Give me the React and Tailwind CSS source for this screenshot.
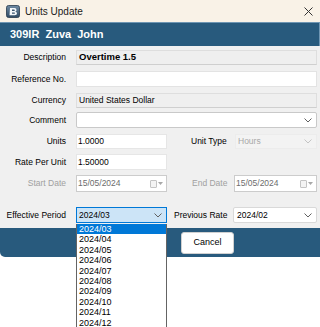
import React from "react";

const periods = [
  "2024/03",
  "2024/04",
  "2024/05",
  "2024/06",
  "2024/07",
  "2024/08",
  "2024/09",
  "2024/10",
  "2024/11",
  "2024/12",
];

function Chevron({ color = "#606060" }) {
  return (
    <svg width="8" height="5" viewBox="0 0 8 5" className="shrink-0">
      <polyline points="0.5,0.5 4,4 7.5,0.5" fill="none" stroke={color} strokeWidth="1" />
    </svg>
  );
}

function DateIcon() {
  return (
    <div className="flex items-center gap-[1px] shrink-0">
      <div className="w-[7px] h-[8px] border border-[#c4c4c4] bg-[#f4f4f4] rounded-[1px]" />
      <svg width="5" height="3" viewBox="0 0 5 3">
        <polygon points="0,0 5,0 2.5,3" fill="#a8a8a8" />
      </svg>
    </div>
  );
}

function Label({ children, muted }) {
  return (
    <div className={`w-[66px] shrink-0 text-right whitespace-nowrap ${muted ? "text-[#a0a0a0]" : "text-black"}`}>
      {children}
    </div>
  );
}

export default function App() {
  return (
    <div
      className="relative w-[320px] h-[327px] overflow-hidden bg-white text-[8.5px] text-black"
      style={{ fontFamily: '"Liberation Sans", Arial, sans-serif' }}
    >
      {/* title bar */}
      <div className="h-[22px] bg-[#f9f2e7] flex items-center pl-[6px] pr-[6px]">
        <svg width="14" height="13" viewBox="0 0 14 13" className="shrink-0">
          <defs>
            <linearGradient id="ic" x1="0" y1="0" x2="0" y2="1">
              <stop offset="0" stopColor="#6f8aa3" />
              <stop offset="1" stopColor="#2f4a63" />
            </linearGradient>
          </defs>
          <rect x="0.5" y="0.5" width="13" height="12" rx="2" fill="url(#ic)" stroke="#27394b" strokeWidth="0.8" />
          <path d="M4 3 H8.5 Q10.5 3 10.5 5 Q10.5 6.3 9.2 6.5 Q11 6.8 11 8.5 Q11 10.3 8.8 10.3 H3.5 Z" fill="#f4f7fa" />
          <path d="M6 4.6 H8 Q8.8 4.6 8.8 5.4 Q8.8 6 8 6 H6 Z M6 7.4 H8.3 Q9.1 7.4 9.1 8.1 Q9.1 8.8 8.3 8.8 H6 Z" fill="#3b5670" />
        </svg>
        <span className="ml-[5px] text-[10px] text-[#1a1a1a]">Units Update</span>
        <div className="ml-auto mr-[1px]">
          <svg width="9" height="9" viewBox="0 0 9 9">
            <path d="M0.5 0.5 L8.5 8.5 M8.5 0.5 L0.5 8.5" stroke="#333" strokeWidth="1" />
          </svg>
        </div>
      </div>

      {/* header */}
      <div className="h-[24px] bg-[#285a7d] border-t border-[#6f96b3] border-r border-r-[#6f96b3] flex items-center pl-[10px]">
        <span className="text-white font-bold text-[11px] whitespace-pre">309IR  Zuva  John</span>
      </div>

      {/* form */}
      <div className="h-[182px] bg-[#f0f0f0] flex flex-col pr-[3px]">
        <div className="flex items-center gap-[10px] mt-[4px] h-[15px]">
          <Label>Description</Label>
          <div className="flex-1 h-full bg-[#efefef] border border-[#dedede] border-b-[#cfcfcf] flex items-center px-[2px] font-bold text-[9.5px]">
            Overtime 1.5
          </div>
        </div>
        <div className="flex items-center gap-[10px] mt-[6px] h-[16px]">
          <Label>Reference No.</Label>
          <div className="flex-1 h-full bg-white border border-[#e3e3e3]" />
        </div>
        <div className="flex items-center gap-[10px] mt-[6px] h-[15px]">
          <Label>Currency</Label>
          <div className="flex-1 h-full bg-[#efefef] border border-[#dedede] border-b-[#cfcfcf] flex items-center px-[2px]">
            United States Dollar
          </div>
        </div>
        <div className="flex items-center gap-[10px] mt-[4px] h-[16px]">
          <Label>Comment</Label>
          <div className="flex-1 h-full bg-white border border-[#c9c9c9] rounded-[2px] flex items-center justify-end pr-[4px]">
            <Chevron />
          </div>
        </div>
        <div className="flex items-center mt-[6px] h-[15px]">
          <Label>Units</Label>
          <div className="ml-[10px] w-[91px] h-full bg-white border border-[#e6e6e6] flex items-center px-[1px]">
            1.0000
          </div>
          <div className="ml-[24px] w-[36px] whitespace-nowrap">Unit Type</div>
          <div className="ml-[8px] flex-1 h-full bg-[#f3f3f3] border border-[#ececec] flex items-center justify-between pl-[2px] pr-[4px] text-[#a8a8a8]">
            Hours
            <Chevron color="#c4c4c4" />
          </div>
        </div>
        <div className="flex items-center mt-[5px] h-[16px]">
          <Label>Rate Per Unit</Label>
          <div className="ml-[10px] w-[91px] h-full bg-white border border-[#e6e6e6] flex items-center px-[1px]">
            1.50000
          </div>
        </div>
        <div className="flex items-center mt-[5px] h-[17px]">
          <Label muted>Start Date</Label>
          <div className="ml-[10px] w-[91px] h-full bg-white border border-[#cccccc] flex items-center justify-between pl-[1px] pr-[3px] text-[#6d6d6d]">
            15/05/2024
            <DateIcon />
          </div>
          <div className="ml-[25px] w-[35px] whitespace-nowrap text-[#a0a0a0]">End Date</div>
          <div className="ml-[7px] flex-1 h-full bg-white border border-[#cccccc] flex items-center justify-between pl-[1px] pr-[3px] text-[#6d6d6d]">
            15/05/2024
            <DateIcon />
          </div>
        </div>
        <div className="flex items-center mt-[15px] h-[16px]">
          <Label>Effective Period</Label>
          <div className="ml-[10px] w-[91px] h-full bg-[#cce4f7] border border-[#0078d7] flex items-center justify-between pl-[2px] pr-[4px]">
            2024/03
            <Chevron />
          </div>
          <div className="ml-[7px] w-[53px] whitespace-nowrap">Previous Rate</div>
          <div className="ml-[6px] flex-1 h-full bg-white border border-[#d9d9d9] rounded-[2px] flex items-center justify-between pl-[3px] pr-[4px]">
            2024/02
            <Chevron />
          </div>
        </div>
      </div>

      {/* button bar */}
      <div className="h-[29px] bg-[#285a7d] rounded-bl-[5px] flex items-center pl-[181px]">
        <button className="w-[53px] h-[22px] bg-white border border-[#d0d0d0] rounded-[3px] text-[9px] text-black">
          Cancel
        </button>
      </div>

      {/* open drop-down list */}
      <div className="absolute left-[76px] top-[224px] w-[91px] h-[110px] bg-white border border-[#646464] border-t-0">
        {periods.map((p, i) => (
          <div
            key={p}
            className={`h-[10.4px] leading-[10.4px] pl-[2px] text-[9px] ${i === 0 ? "bg-[#0078d7] text-white" : "text-black"}`}
          >
            {p}
          </div>
        ))}
      </div>
    </div>
  );
}
